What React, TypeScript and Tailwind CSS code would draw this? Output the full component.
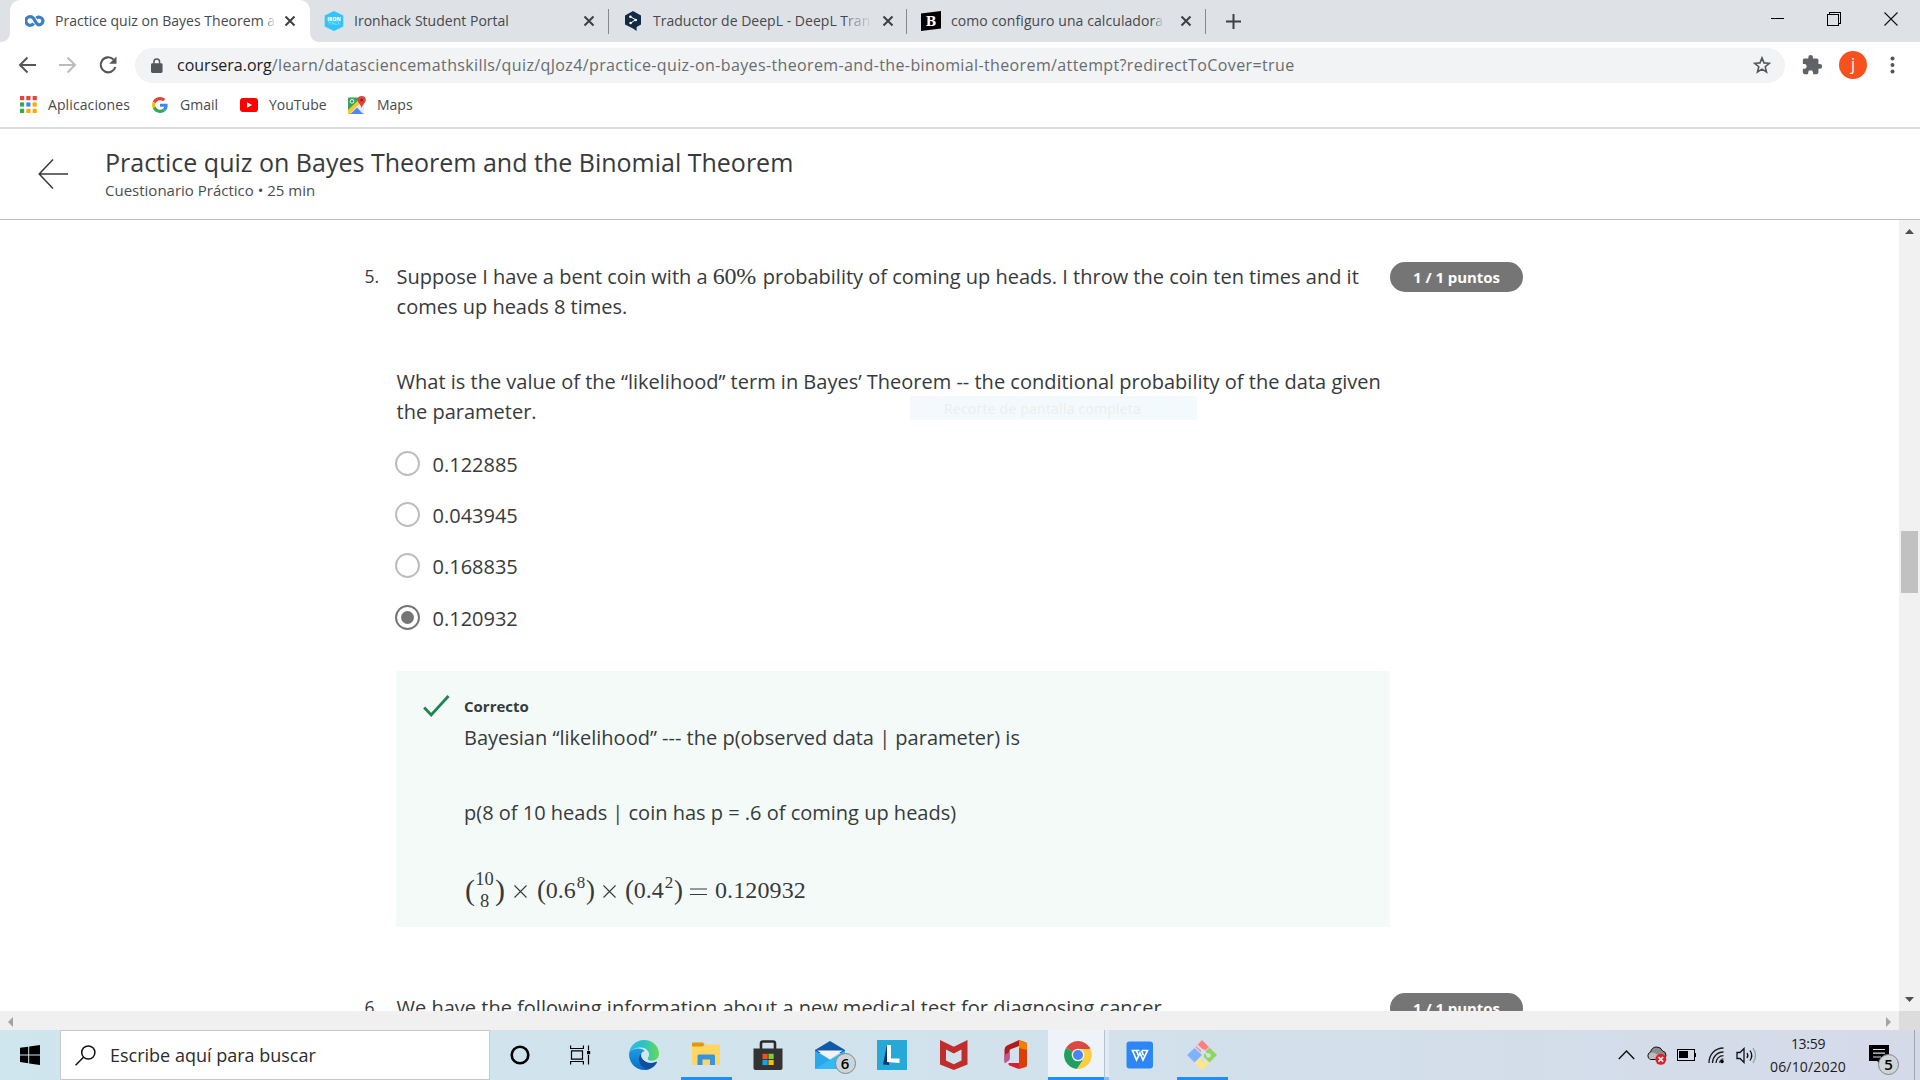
import React from "react";

const blockText = "text-[20px] leading-[30px] whitespace-nowrap";

/* ---------- favicons and bookmark icons ---------- */

function CourseraIcon() {
  return (
    <svg width="20" height="14" viewBox="0 0 20 14" fill="none" stroke="#3a7fc8" strokeWidth="3.2">
      <path d="M8.600 9.500A4.300 4.300 0 1 1 8.400 4.200c1.600 1.600 2.200 6.400 5.600 6.700a3.900 3.900 0 1 0-2.600-6.800" />
    </svg>
  );
}

function IronhackIcon() {
  return (
    <svg width="20" height="20" viewBox="0 0 20 20">
      <path d="M10 0l9.300 4.600v10.800L10 20 .7 15.400V4.600z" fill="#2dc5fa" />
      <text x="10" y="9.500" textAnchor="middle" fontSize="5" fontWeight="800" fill="#fff" fontFamily="Open Sans, sans-serif">IRON</text>
      <text x="10" y="14" textAnchor="middle" fontSize="4.600" fill="#9be4ff" fontFamily="Open Sans, sans-serif">HACK</text>
    </svg>
  );
}

function DeepLIcon() {
  return (
    <svg width="18" height="20" viewBox="0 0 18 20">
      <path d="M9 0l8 4.400v9L12.600 16v4L9 17.600 1 13.400v-9z" fill="#0f2b46" />
      <path d="M6.400 5.600l5.200 3.200-5.200 3.400" stroke="#fff" strokeWidth="1" fill="none" />
      <circle cx="6.400" cy="5.800" r="1.300" fill="#fff" />
      <circle cx="11.800" cy="9" r="1.300" fill="#fff" />
      <circle cx="6.600" cy="12" r="1.300" fill="#fff" />
    </svg>
  );
}

function BrainlyIcon() {
  return (
    <svg width="20" height="20" viewBox="0 0 20 20">
      <path d="M0 2.400L20 0v17.600L0 20z" fill="#000" />
      <text x="10" y="14.500" textAnchor="middle" fontSize="12.500" fontWeight="800" fill="#fff" fontFamily="DejaVu Serif, serif">B</text>
    </svg>
  );
}

function AppsIcon() {
  const colors = ["#ea4335", "#ea4335", "#ea4335", "#34a853", "#4285f4", "#fbab09", "#34a853", "#fbab09", "#fbab09"];
  return (
    <svg width="17" height="17" viewBox="0 0 17 17">
      {colors.map((c, i) => (
        <rect key={i} x={(i % 3) * 6.3} y={Math.floor(i / 3) * 6.4} width="4.200" height="4.200" fill={c} />
      ))}
    </svg>
  );
}

function GoogleIcon() {
  return (
    <svg width="16" height="16" viewBox="0 0 48 48">
      <path fill="#ea4335" d="M24 9.500c3.500 0 6.700 1.200 9.200 3.600l6.900-6.900C35.900 2.400 30.500 0 24 0 14.600 0 6.500 5.400 2.600 13.200l8 6.200C12.400 13.700 17.700 9.500 24 9.500z" />
      <path fill="#4285f4" d="M47 24.600c0-1.600-.2-3.100-.4-4.600H24v9h12.900c-.6 3-2.300 5.500-4.800 7.200l7.700 6C44.400 38 47 31.800 47 24.600z" />
      <path fill="#fbbc05" d="M10.500 28.600c-.5-1.500-.8-3-.8-4.600s.3-3.100.8-4.600l-8-6.200C.9 16.500 0 20.100 0 24s.9 7.500 2.600 10.800l7.900-6.200z" />
      <path fill="#34a853" d="M24 48c6.500 0 11.900-2.100 15.900-5.800l-7.700-6c-2.200 1.500-4.900 2.300-8.200 2.300-6.300 0-11.600-4.200-13.500-9.900l-8 6.200C6.500 42.600 14.600 48 24 48z" />
    </svg>
  );
}

function YouTubeIcon() {
  return (
    <svg width="18" height="14" viewBox="0 0 18 14">
      <rect width="18" height="14" rx="3" fill="#f00" />
      <path d="M7 4.200l5 2.800-5 2.800z" fill="#fff" />
    </svg>
  );
}

function MapsIcon() {
  return (
    <svg width="18" height="18" viewBox="0 0 18 18">
      <rect y="1.500" width="16" height="16.500" rx="1" fill="#34a35a" />
      <path d="M0 16.500L12 4l4 4v9.500H0z" fill="#e8eaed" />
      <path d="M0 14L11 3.500l2 2.500L1.500 18H0z" fill="#fbc72c" />
      <path d="M2.500 18L9 11.500l6 6.500z" fill="#4a8af4" />
      <circle cx="4" cy="5.300" r="1.900" fill="none" stroke="#fff" strokeWidth=".9" />
      <path d="M13.700 0a4.100 4.100 0 0 0-4.100 4.100c0 3 3.300 4.200 4.100 8.200.8-4 4.100-5.200 4.100-8.200A4.100 4.100 0 0 0 13.700 0z" fill="#e0453a" />
      <circle cx="13.700" cy="4.100" r="1.500" fill="#8c2b22" />
    </svg>
  );
}

/* ---------- browser chrome ---------- */

function TabClose() {
  return (
    <svg width="12" height="12" viewBox="0 0 12 12" stroke="#3c4043" strokeWidth="2" className="shrink-0">
      <path d="M1.500 1.500l9 9M10.500 1.500l-9 9" />
    </svg>
  );
}

function Tab({ icon, text, fade, width, last }: { icon: React.ReactNode; text: string; fade: string; width: string; last?: boolean }) {
  return (
    <div className={`flex h-[42px] items-center ${width}`}>
      <span className="flex w-[20px] shrink-0 justify-center">{icon}</span>
      <span className={`ml-[10px] w-[220px] shrink-0 whitespace-nowrap text-[14px] leading-5 text-[#45494d] ${last ? "tracking-[0.08px]" : "tracking-[0.02px]"}`}>
        {text}
        <span className="bg-gradient-to-r from-[#45494d]/70 to-[#45494d]/10 bg-clip-text text-transparent">{fade}</span>
      </span>
      <span className="ml-[9px]"><TabClose /></span>
    </div>
  );
}

function TabStrip() {
  return (
    <div className="flex h-[42px] bg-[#dee1e6]">
      <div className="flex w-[10px] bg-white"><div className="w-full rounded-br-[9px] bg-[#dee1e6]" /></div>
      <div className="flex w-[300px] rounded-t-[10px] bg-white pl-[15px]">
        <Tab icon={<CourseraIcon />} text="Practice quiz on Bayes Theorem " fade="a" width="w-[285px]" />
      </div>
      <div className="flex w-[10px] bg-white"><div className="w-full rounded-bl-[9px] bg-[#dee1e6]" /></div>
      <div className="flex pl-[4px]">
        <Tab icon={<IronhackIcon />} text="Ironhack Student Portal" fade="" width="w-[284px]" />
        <div className="mt-[9px] h-[25px] w-px bg-[#85888c]" />
      </div>
      <div className="flex pl-[14px]">
        <Tab icon={<DeepLIcon />} text="Traductor de DeepL - DeepL T" fade="ran" width="w-[283px]" />
        <div className="mt-[9px] h-[25px] w-px bg-[#85888c]" />
      </div>
      <div className="flex pl-[14px]">
        <Tab icon={<BrainlyIcon />} text="como configuro una calculador" fade="a" width="w-[284px]" last />
        <div className="mt-[9px] h-[25px] w-px bg-[#85888c]" />
      </div>
      <svg width="15" height="15" viewBox="0 0 15 15" stroke="#3c4043" strokeWidth="2" className="mt-[14px] ml-[20px]">
        <path d="M7.500 0v15M0 7.500h15" />
      </svg>
      <div className="ml-auto flex h-[37px] items-center gap-[43px] pr-[22px]">
        <svg width="14" height="14" viewBox="0 0 14 14"><path d="M.5 6h13" stroke="#000" strokeWidth="1" shapeRendering="crispEdges" /></svg>
        <svg width="14" height="14" viewBox="0 0 14 14" fill="none" stroke="#000" shapeRendering="crispEdges">
          <path d="M.5 2.500h10.500v11H.5zM2.500 2.500v-2h11v11h-2.500" />
        </svg>
        <svg width="14" height="14" viewBox="0 0 14 14" stroke="#111" strokeWidth="1.100"><path d="M.5.500l13 13M13.500.500l-13 13" /></svg>
      </div>
    </div>
  );
}

function Toolbar() {
  return (
    <div className="flex h-[45px] items-center bg-white pt-[1px]">
      <svg width="18" height="18" viewBox="0 0 18 18" fill="none" stroke="#53575b" strokeWidth="2" className="ml-[18px]">
        <path d="M18 9H2.500M9.500 1.500L2 9l7.500 7.500" />
      </svg>
      <svg width="18" height="18" viewBox="0 0 18 18" fill="none" stroke="#b9bbbe" strokeWidth="2" className="ml-[23px]">
        <path d="M0 9h15.500M8.500 1.500L16 9l-7.500 7.500" />
      </svg>
      <svg width="20" height="20" viewBox="0 0 20 20" fill="none" stroke="#53575b" strokeWidth="2.100" className="ml-[21px]">
        <path d="M15.600 4.600A7.500 7.500 0 1 0 17.400 12" />
        <path d="M18.500 1.500v7.300h-7.300z" fill="#53575b" stroke="none" />
      </svg>
      <div className="ml-[17px] flex h-[35px] w-[1650px] items-center rounded-full bg-[#f1f3f4] pl-[16px]">
        <svg width="12" height="15" viewBox="0 0 13 16">
          <rect y="5.500" width="12.500" height="10.500" rx="1.500" fill="#53575b" />
          <path d="M3.200 6V4a3 3 0 0 1 6.100 0v2" fill="none" stroke="#53575b" strokeWidth="1.600" />
        </svg>
        <span className="ml-[14px] whitespace-nowrap text-[16px] leading-6 text-[#202124]">
          coursera.org
          <span className="tracking-[0.378px] text-[#686c70]">/learn/datasciencemathskills/quiz/qJoz4/practice-quiz-on-bayes-theorem-and-the-binomial-theorem/attempt?redirectToCover=true</span>
        </span>
        <svg width="18" height="18" viewBox="0 0 18 18" fill="none" stroke="#53575b" strokeWidth="1.600" className="mr-[14px] ml-auto">
          <path d="M9 1.900l2 5 5.300.4-4.100 3.400 1.300 5.300L9 13.100 4.500 16l1.300-5.300-4.100-3.400L7 6.900z" />
        </svg>
      </div>
      <svg width="22" height="22" viewBox="0 0 24 24" fill="#5f6368" className="ml-[16px]">
        <path d="M20.500 11H19V7c0-1.100-.9-2-2-2h-4V3.500a2.500 2.500 0 0 0-5 0V5H4c-1.100 0-2 .9-2 2v3.800h1.500a2.700 2.700 0 0 1 0 5.400H2V20c0 1.100.9 2 2 2h3.800v-1.500a2.700 2.700 0 0 1 5.400 0V22H17c1.100 0 2-.9 2-2v-4h1.500a2.500 2.500 0 0 0 0-5z" />
      </svg>
      <div className="ml-[16px] flex h-[28px] w-[28px] items-center justify-center rounded-full bg-[#f7511d] pb-[2px] text-[16px] text-white">j</div>
      <svg width="5" height="18" viewBox="0 0 5 18" fill="#53575b" className="ml-[23px]">
        <circle cx="2.500" cy="2.500" r="2" /><circle cx="2.500" cy="9" r="2" /><circle cx="2.500" cy="15.500" r="2" />
      </svg>
    </div>
  );
}

function Bookmarks() {
  return (
    <div className="flex h-[42px] items-center border-b-2 border-[#dadce0] bg-white pb-[5px] pl-[20px] text-[14px] text-[#45494d]">
      <AppsIcon />
      <span className="ml-[11px] w-[104px] tracking-[0.1px]">Aplicaciones</span>
      <GoogleIcon />
      <span className="ml-[12px] w-[60px]">Gmail</span>
      <YouTubeIcon />
      <span className="ml-[11px] w-[79px]">YouTube</span>
      <MapsIcon />
      <span className="ml-[11px]">Maps</span>
    </div>
  );
}

/* ---------- page ---------- */

function PageHeader() {
  return (
    <header className="flex h-[91px] border-b border-[#bdbdbd] bg-white">
      <svg width="30" height="30" viewBox="0 0 30 30" fill="none" stroke="#373a3c" strokeWidth="1.500" className="mt-[30px] ml-[38px]">
        <path d="M30 15H1.500M15 .5L1.200 15 15 29.500" />
      </svg>
      <div className="ml-[37px] pt-[16px] text-[#373a3c]">
        <h1 className="text-[25px] leading-[34px] whitespace-nowrap">Practice quiz on Bayes Theorem and the Binomial Theorem</h1>
        <p className="text-[15px] leading-[22px] text-[#4a4d4f]">Cuestionario Práctico • 25 min</p>
      </div>
    </header>
  );
}

function Badge() {
  return (
    <div className="flex h-[30px] w-[133px] items-center justify-center rounded-full bg-[#757575] pt-px text-[15px] font-bold tracking-[-0.040px] text-white">1 / 1 puntos</div>
  );
}

function Radio({ label, checked }: { label: string; checked?: boolean }) {
  return (
    <div className="flex h-[51.200px] items-center">
      <span className={`-mt-px flex h-[25px] w-[25px] items-center justify-center rounded-full border-2 ${checked ? "border-[#757575]" : "border-[#bdbdbd]"}`}>
        {checked && <span className="h-[13px] w-[13px] rounded-full bg-[#757575]" />}
      </span>
      <span className="ml-[12.500px] pt-[2px] text-[20px] leading-[30px]">{label}</span>
    </div>
  );
}

function Paren({ children, tall }: { children: string; tall?: boolean }) {
  return <span className={`inline-block text-center leading-none ${tall ? "w-[9px] text-[30px]" : "w-[8px] text-[27px]"}`}>{children}</span>;
}

function Times({ tight }: { tight?: boolean }) {
  return (
    <svg width="13" height="13" viewBox="0 0 13 13" stroke="#373a3c" strokeWidth="1.100" className={`mt-[2px] ${tight ? "mx-[9px]" : "mx-[10px]"}`}>
      <path d="M.5.500l12 12M12.500.500l-12 12" />
    </svg>
  );
}

function Power({ base, exp }: { base: string; exp: string }) {
  return (
    <span className="flex items-center">
      <Paren>(</Paren>
      <span className="flex w-[41px] justify-center leading-none">
        <span>{base}</span>
        <span className="-mt-[4px] ml-px text-[17px] leading-none">{exp}</span>
      </span>
      <Paren>)</Paren>
    </span>
  );
}

function Formula() {
  return (
    <div className="flex h-[36px] items-center font-['Liberation_Serif'] text-[24px] leading-none text-[#373a3c]">
      <Paren tall>(</Paren>
      <span className="flex w-[21px] flex-col items-center gap-[4px] text-[18.500px] leading-[18px]">
        <span>10</span>
        <span>8</span>
      </span>
      <Paren tall>)</Paren>
      <Times />
      <Power base="0.6" exp="8" />
      <Times tight />
      <Power base="0.4" exp="2" />
      <svg width="17" height="8" viewBox="0 0 17 8" stroke="#373a3c" strokeWidth="1.100" className="mx-[8px] mt-[3px]">
        <path d="M0 1h17M0 6.500h17" />
      </svg>
      <span className="tracking-[0.120px]">0.120932</span>
    </div>
  );
}

function Quiz() {
  return (
    <main className="flex h-full w-[1899px] flex-col overflow-hidden bg-white text-[#373a3c]">
      <section className="flex h-[731px] shrink-0 pt-[42px]">
        <span className="ml-[364.500px] w-[31.500px] text-[17.500px] leading-[28px]">5.</span>
        <div className="relative w-[994px]">
          <div className="pl-[0.600px]">
            <p className={blockText}>
              Suppose I have a bent coin with a <span className="inline-block w-[44.800px] font-['Liberation_Serif'] text-[24px] leading-none tracking-[-0.300px]">60%</span> probability of coming up heads. I throw the coin ten times and it
            </p>
            <p className={blockText}>comes up heads 8 times.</p>
            <p className={`${blockText} mt-[45px]`}>What is the value of the “likelihood” term in Bayes’ Theorem -- the conditional probability of the data given</p>
            <p className={blockText}>the parameter.</p>
          </div>
          <div className="absolute top-[134px] left-[514px] flex h-[24px] w-[287px] items-center bg-gradient-to-r from-[#f5f9fe] from-10% to-[#f3fafd] to-12% pl-[34px] text-[14px] tracking-[0.220px] text-[#eceeed]">
            Recorte de pantalla completa
          </div>
          <div className="mt-[11.500px] -ml-[1px]">
            <Radio label="0.122885" />
            <Radio label="0.043945" />
            <Radio label="0.168835" />
            <Radio label="0.120932" checked />
          </div>
          <div className="mt-[28px] flex h-[256px] w-[994px] bg-[#f4faf8] pt-[23px]">
            <svg width="27" height="24" viewBox="0 0 27 24" fill="none" stroke="#1f8354" strokeWidth="2.800" className="ml-[27px]">
              <path d="M1.200 13.500l7 7.500L25.500 2" />
            </svg>
            <div className="ml-[14px]">
              <p className="text-[15px] leading-[24px] font-bold">Correcto</p>
              <p className={`${blockText} mt-[5px]`}>Bayesian “likelihood” --- the p(observed data | parameter) is</p>
              <p className={`${blockText} mt-[45px]`}>p(8 of 10 heads | coin has p = .6 of coming up heads)</p>
              <div className="mt-[44px] ml-[1px]"><Formula /></div>
            </div>
          </div>
        </div>
        <Badge />
      </section>
      <section className="flex h-[60px] shrink-0 pt-[42px]">
        <span className="ml-[364.500px] w-[31.500px] text-[17.500px] leading-[28px]">6.</span>
        <p className={`${blockText} w-[994px] pl-[0.600px]`}>We have the following information about a new medical test for diagnosing cancer.</p>
        <Badge />
      </section>
    </main>
  );
}

function VerticalScrollbar() {
  return (
    <div className="flex h-full w-[21px] flex-col items-center bg-[#f1f1f1] py-[9px]">
      <svg width="9" height="5" viewBox="0 0 9 5"><path d="M0 5L4.500 0 9 5z" fill="#505050" /></svg>
      <div className="mt-[297px] h-[62px] w-[17px] bg-[#c1c1c1]" />
      <svg width="9" height="5" viewBox="0 0 9 5" className="mt-auto"><path d="M0 0l4.500 5L9 0z" fill="#505050" /></svg>
    </div>
  );
}

function HorizontalScrollbar() {
  return (
    <div className="flex h-[19px] items-center bg-[#f0f0f0] pt-[2px]">
      <svg width="5" height="10" viewBox="0 0 5 10" className="ml-[8px]"><path d="M5 0L0 5l5 5z" fill="#a3a3a3" /></svg>
      <svg width="5" height="10" viewBox="0 0 5 10" className="mr-[8px] ml-auto"><path d="M0 0l5 5-5 5z" fill="#a3a3a3" /></svg>
      <div className="-mt-[2px] h-[19px] w-[21px] bg-[#dcdcdc]" />
    </div>
  );
}

/* ---------- taskbar ---------- */

function TaskItem({ children, width, active, highlight }: { children: React.ReactNode; width: string; active?: boolean; highlight?: boolean }) {
  return (
    <div className={`flex h-[50px] flex-col items-center border-b-[3px] ${width} ${active ? "border-[#1e8fff]" : "border-transparent"} ${highlight ? "bg-[#edf3f8]" : ""}`}>
      <div className="flex h-full items-center pt-[3px]">{children}</div>
    </div>
  );
}

function EdgeIcon() {
  return (
    <svg width="30" height="30" viewBox="0 0 30 30">
      <defs>
        <linearGradient id="edgeTop" x1="0" x2="1"><stop offset="0" stopColor="#2fb5ec" /><stop offset=".5" stopColor="#2cc4c4" /><stop offset="1" stopColor="#64dc4f" /></linearGradient>
        <linearGradient id="edgeSide" x1="0" y1="0" x2="0" y2="1"><stop offset="0" stopColor="#1c9de0" /><stop offset="1" stopColor="#0c6cc8" /></linearGradient>
      </defs>
      <path d="M15 0C6.500 0 .5 6.500 0 14c3-5.500 8-6.500 12-6.500 5 0 8 3.500 8 7 0 2-1.500 3-1.500 4 0 1.500 2 2.300 4.500 2.300 4 0 7-3 7-7C30 6 23.500 0 15 0z" fill="url(#edgeTop)" />
      <path d="M0 14c0 9 6.500 16 15.500 16 1.500 0 3-.2 4-.6-6-1.400-9-6-9-10.400 0-4 2-6.500 5-8-1-1.500-3-2.500-6-2.500C4.500 8.500.5 11 0 14z" fill="url(#edgeSide)" />
      <path d="M12.500 13.500c-2 1.500-3 4-2.500 7 1 5.500 5 8.800 9.500 8.900 4-1.200 6.800-3.800 8.500-6.900.3-.6-.2-1-.7-.7-6 2.700-14.300.8-14.800-8.300z" fill="#104f9f" />
      <path d="M15.600 11.400c-3 .8-4.200 3.600-3 6 1.300 2.900 4.900 4.900 9 4.900 3 0 5-.7 6-1.500-1.500.3-3 .3-4.500.3-2.500 0-4.800-1.200-4.700-2.700.1-1 1.700-2 1.700-4 0-2.100-1.700-3.500-4.500-3z" fill="#d1e6ee" />
    </svg>
  );
}

function ExplorerIcon() {
  return (
    <svg width="28" height="24" viewBox="0 0 28 24">
      <path d="M0 1.500Q0 .5 1 .5h10l2 3v3H0z" fill="#dd9a05" />
      <path d="M0 4.500h10.500l2.500-2h14q1 0 1 1V22q0 1-1 1H1q-1 0-1-1z" fill="#ffd663" />
      <path d="M5.500 23V14q0-1.500 1.500-1.500h14.500q1.500 0 1.500 1.500v9h-5v-5.500h-7.500V23z" fill="#3594dd" />
    </svg>
  );
}

function StoreIcon() {
  return (
    <svg width="30" height="30" viewBox="0 0 30 30">
      <path d="M8 9V3.500Q8 1.500 10 1.500h10q2 0 2 2V9" fill="none" stroke="#2a2a2a" strokeWidth="2.600" />
      <path d="M.5 8.500h29V28q0 2-2 2h-25q-2 0-2-2z" fill="#333" />
      <path fill="#f1511b" d="M9.500 13.800h5.200V19H9.500z" /><path fill="#80cc28" d="M15.500 13.800h5.200V19h-5.200z" />
      <path fill="#00adef" d="M9.500 19.900h5.200v5.200H9.500z" /><path fill="#fbbc09" d="M15.500 19.900h5.200v5.200h-5.200z" />
    </svg>
  );
}

function CountBadge({ children, place }: { children: string; place: string }) {
  return (
    <span className={`absolute flex h-[21px] w-[21px] items-center justify-center rounded-full border border-[#7f888c] bg-[#ced4d7] text-[15px] leading-none font-semibold text-black ${place}`}>
      {children}
    </span>
  );
}

function MailIcon() {
  return (
    <div className="relative">
      <svg width="30" height="28" viewBox="0 0 30 28">
        <path d="M0 9L15 0l15 9v3H0z" fill="#1058a8" />
        <path d="M0 9.500L30 28H0z" fill="#2aa6ea" />
        <path d="M30 9.500V28H0z" fill="#36b9f3" />
        <path d="M2 9.500h26L15 18z" fill="#f3f3f3" />
      </svg>
      <CountBadge place="-right-[11px] -bottom-[5px]">6</CountBadge>
    </div>
  );
}

function LIcon() {
  return (
    <svg width="30" height="30" viewBox="0 0 30 30">
      <rect width="30" height="30" fill="#27a9d8" />
      <path d="M10 5L6 24.500 12 25V22z" fill="#07366e" />
      <path d="M10 5h4v13.500h8.500V23L10 22z" fill="#fff" />
    </svg>
  );
}

function McAfeeIcon() {
  return (
    <svg width="28" height="30" viewBox="0 0 28 30">
      <path fillRule="evenodd" d="M0 0l13.800 6.800L27.500 0v24.500L13.800 30 0 24.500zM6 9.500v11l7.800 3.700 7.700-3.700v-11l-7.700 3.900z" fill="#c02d2d" />
    </svg>
  );
}

function OfficeIcon() {
  return (
    <svg width="24" height="30" viewBox="0 0 24 30">
      <path d="M15 0L3 5.500Q.5 7 .5 9.500v12L5.500 19V11q0-1.200 1-1.700L15 6z" fill="#b31b1b" />
      <path d="M.5 15v7.500q0 1 1 .5l4-3v-8z" fill="#c0568e" />
      <path d="M15 0l7 2.500q1 .5 1 2V25q0 1.500-1 2L15 29z" fill="#dc3e06" />
      <path d="M15 0l7 2.500q1 .5 1 2V10l-8-2z" fill="#ee8100" />
      <path d="M5 23h10v6L5.500 25.500Q3.500 24 5 23z" fill="#d81c3c" />
    </svg>
  );
}

function ChromeIcon() {
  return (
    <svg width="28" height="28" viewBox="0 0 28 28">
      <path d="M14 14L1.900 7A14 14 0 0 1 26.100 7z" fill="#db4a3f" />
      <path d="M14 14L1.900 7A14 14 0 0 0 13 28l6-9z" fill="#1fa15d" />
      <path d="M14 14l5 5-6 9A14 14 0 0 0 26.500 8H14z" fill="#ffcd41" />
      <path d="M14 7.700h12.400L25.500 6H8z" fill="#db4a3f" />
      <circle cx="14" cy="14" r="6.300" fill="#f1f1f1" />
      <circle cx="14" cy="14" r="5" fill="#4a86ef" />
    </svg>
  );
}

function WpsIcon() {
  return (
    <svg width="28" height="28" viewBox="0 0 28 28">
      <rect x=".5" y=".5" width="26.500" height="27" rx="3" fill="#2c86f6" />
      <path d="M5.500 9.500h8M6.500 9.500l4 9.500 3.500-7 3 7 4.500-9.500h-5.500M10.500 10l2 4.500M15.500 9.500l2 5" fill="none" stroke="#fff" strokeWidth="1.700" />
    </svg>
  );
}

function GitIcon() {
  return (
    <svg width="30" height="30" viewBox="0 0 30 30">
      <path d="M15 0l7 7-7 6.500L8.500 7z" fill="#ff7f85" />
      <path d="M7.500 8L15 15l-7.500 7.500L0 15z" fill="#80b3ff" />
      <path d="M22.500 7.500L30 15l-7.500 7.500L15 15z" fill="#8fd65f" />
      <path d="M15 16l7 7-7 7-7-7z" fill="#ffe680" />
      <path d="M10 5.500l7 6.500M16 11v10M17 12l5 3.500" stroke="#d5e0ec" strokeWidth="2" />
      <circle cx="16" cy="11.500" r="2.200" fill="#d5e0ec" /><circle cx="16" cy="20.500" r="2.300" fill="#d5e0ec" /><circle cx="21.500" cy="15.500" r="2.300" fill="#d5e0ec" />
    </svg>
  );
}

function Tray() {
  return (
    <div className="ml-auto flex h-[50px] items-center">
      <svg width="17" height="10" viewBox="0 0 17 10" fill="none" stroke="#111" strokeWidth="1.400"><path d="M.8 9l7.700-8 7.700 8" /></svg>
      <svg width="21" height="19" viewBox="0 0 21 19" className="mt-px ml-[11px]">
        <path d="M4.500 13.500a4 4 0 0 1 0-7.500Q6 1 10.500 1t6 4q3.500.5 3.500 4.500 0 4-4 4z" fill="#8c8c8c" stroke="#111" strokeWidth="1" />
        <path d="M4.500 13a3.500 3.500 0 0 1 1-6.500Q9 6 12 9l4 4z" fill="#bcbcbc" />
        <circle cx="14.800" cy="13.300" r="5.500" fill="#da2128" />
        <path d="M12.500 11l4.600 4.600M17.100 11l-4.600 4.600" stroke="#fff" strokeWidth="1.600" />
      </svg>
      <svg width="19" height="12" viewBox="0 0 19 12" shapeRendering="crispEdges" className="ml-[10px]">
        <path d="M.5.500h17v11H.5z" fill="none" stroke="#000" strokeWidth="1" />
        <path d="M18 4h1v4h-1zM2 2h9v7H2z" fill="#000" />
      </svg>
      <svg width="17" height="17" viewBox="0 0 17 17" fill="none" stroke="#1b1b1b" strokeWidth="1.300" className="ml-[12px]">
        <path d="M1 16C1 7.500 7 1 15.500 1M4.500 16c0-6 4.500-11 11-11M8 16c0-4 3-7.300 7.500-7.300" />
        <path d="M11.500 16a4 4 0 0 1 4-4" stroke="#555" />
        <circle cx="14" cy="14.500" r="1.800" fill="#000" stroke="none" />
      </svg>
      <svg width="21" height="19" viewBox="0 0 21 19" fill="none" stroke="#111" strokeWidth="1.300" className="ml-[11px]">
        <path d="M1 6.500h3l4-4v14l-4-4H1z" /><path d="M11 7q1.700 2.500 0 5M14 4.500q3.500 5 0 10" /><path d="M17 2q5 7.500 0 15" stroke="#969ca6" />
      </svg>
      <div className="ml-[12px] flex w-[78px] flex-col items-center text-[14px] leading-[23px] text-[#1b1b1b]">
        <span className="tracking-[-0.300px]">13:59</span>
        <span className="tracking-[0.170px]">06/10/2020</span>
      </div>
      <div className="relative ml-[22px]">
        <svg width="20" height="20" viewBox="0 0 20 20"><path d="M0 0h20v16h-8v4l-4-4H0z" fill="#000" /><path d="M4 4.500h12M4 8.200h12M4 12h8" stroke="#d5dcea" strokeWidth="1.200" /></svg>
        <CountBadge place="-right-[10px] -bottom-[10px]">5</CountBadge>
      </div>
      <div className="mr-[5px] ml-[25px] h-[50px] w-px bg-[#9fa6b5]" />
    </div>
  );
}

function Taskbar() {
  return (
    <footer className="flex h-[50px] bg-gradient-to-r from-[#cfe6ee] via-[#d1e2ec] to-[#d5dae9]">
      <div className="flex w-[60px] items-center justify-center">
        <svg width="20" height="20" viewBox="0 0 20 20" fill="#000"><path d="M0 2.800L8.200 1.700v7.700H0zM9.200 1.500L20 0v9.400H9.200zM0 10.400h8.200v7.800L0 17.100zM9.200 10.400H20V20L9.200 18.400z" /></svg>
      </div>
      <div className="flex w-[430px] items-center border border-[#c9c9c9] bg-white text-[18px] text-[#2b2b2b]">
        <svg width="21" height="21" viewBox="0 0 21 21" fill="none" stroke="#111" strokeWidth="1.500" className="ml-[14px]"><circle cx="13.300" cy="7.500" r="6.600" /><path d="M8.500 12.200L.6 20.300" /></svg>
        <span className="ml-[14px]">Escribe aquí para buscar</span>
      </div>
      <TaskItem width="w-[60px]">
        <svg width="20" height="20" viewBox="0 0 20 20"><circle cx="10" cy="10" r="8.300" fill="none" stroke="#000" strokeWidth="2.600" /></svg>
      </TaskItem>
      <TaskItem width="w-[60px]">
        <svg width="21" height="20" viewBox="0 0 21 20" fill="none" stroke="#000" strokeWidth="1.200">
          <path d="M.6.500v3h12.800v-3M.6 19.500v-3h12.800v3M1.500 5.800h11v8.400h-11zM18.500.500v5M18.500 10v9.500" /><path d="M17 6h3.200v3.200H17z" fill="#000" stroke="none" />
        </svg>
      </TaskItem>
      <TaskItem width="w-[68px]"><EdgeIcon /></TaskItem>
      <div className="w-[3px]" />
      <TaskItem width="w-[51px]" active><div className="-mt-[3px] -ml-[1px]"><ExplorerIcon /></div></TaskItem>
      <TaskItem width="w-[71px]"><StoreIcon /></TaskItem>
      <TaskItem width="w-[53px]"><MailIcon /></TaskItem>
      <TaskItem width="w-[72px]"><LIcon /></TaskItem>
      <TaskItem width="w-[52px]"><McAfeeIcon /></TaskItem>
      <TaskItem width="w-[68px]"><div className="ml-[3px]"><OfficeIcon /></div></TaskItem>
      <TaskItem width="w-[56px]" active highlight><div className="ml-[3px]"><ChromeIcon /></div></TaskItem>
      <div className="w-[5px] border-b-[3px] border-l border-b-[#7dbdfb] border-l-[#b3c2d0] bg-[#e2eaf2]" />
      <TaskItem width="w-[62px]"><WpsIcon /></TaskItem>
      <div className="w-[6px]" />
      <TaskItem width="w-[51px]" active><div className="-ml-[2px]"><GitIcon /></div></TaskItem>
      <Tray />
    </footer>
  );
}

export default function App() {
  return (
    <div className="flex h-[1080px] w-[1920px] flex-col overflow-hidden bg-white font-['Open_Sans',sans-serif]">
      <TabStrip />
      <Toolbar />
      <Bookmarks />
      <PageHeader />
      <div className="flex h-[791px]">
        <Quiz />
        <VerticalScrollbar />
      </div>
      <HorizontalScrollbar />
      <Taskbar />
    </div>
  );
}
